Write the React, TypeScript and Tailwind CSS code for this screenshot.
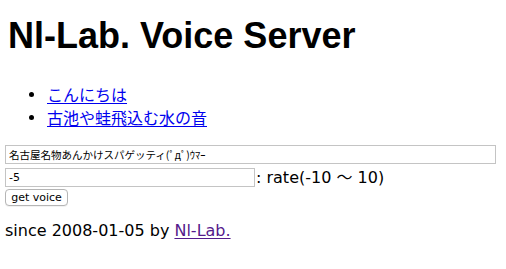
import React from 'react';

const sans = "font-['DejaVu_Sans','Noto_Sans_CJK_JP',sans-serif]";

const links = ['こんにちは', '古池や蛙飛込む水の音'];

export default function App() {
  return (
    <div className={`w-[506px] h-[269px] bg-white text-black pt-[15px] overflow-hidden ${sans}`}>
      <h1 className="pl-[8px] text-[36px] leading-[41px] font-bold font-['Liberation_Sans',sans-serif]">Nl-Lab. Voice Server</h1>

      <ul className="mt-[27px] pl-[29px] text-[16px] leading-[23px] font-['Noto_Sans_CJK_JP',sans-serif]">
        {links.map((t) => (
          <li key={t} className="flex items-center">
            <span className="w-[5px] h-[5px] rounded-full bg-black mr-[13px]" />
            <a href="#" className="text-[#0000EE] underline underline-offset-[2px]">{t}</a>
          </li>
        ))}
      </ul>

      {/* フォーム */}
      <div className="mt-[16px] pl-[5px] flex flex-col items-start">
        <input
          type="text"
          defaultValue="名古屋名物あんかけスパゲッティ(ﾟдﾟ)ｳﾏｰ"
          className="w-[491px] h-[19px] border border-[#c4c4c4] px-[3px] text-[10.5px] leading-[17px] outline-none font-['Noto_Sans_CJK_JP',sans-serif]"
        />
        <div className="mt-[4px] flex items-center">
          <input
            type="text"
            defaultValue="-5"
            className="w-[250px] h-[19px] border border-[#c4c4c4] px-[3px] text-[11px] leading-[17px] outline-none"
          />
          <span className="ml-[1px] text-[16px] leading-[18px]">: rate(-10 〜 10)</span>
        </div>
        <button className="mt-[2px] w-[63px] h-[17px] border border-[#b5b5b5] rounded-[4px] bg-white text-[11px] leading-[15px] text-black shadow-[0_1px_0_rgba(0,0,0,0.05)]">
          get voice
        </button>
      </div>

      <p className="mt-[16px] pl-[5px] text-[16px] leading-[18px]">
        since 2008-01-05 by{' '}
        <a href="#" className="text-[#551A8B] underline underline-offset-[2px]">Nl-Lab.</a>
      </p>
    </div>
  );
}
